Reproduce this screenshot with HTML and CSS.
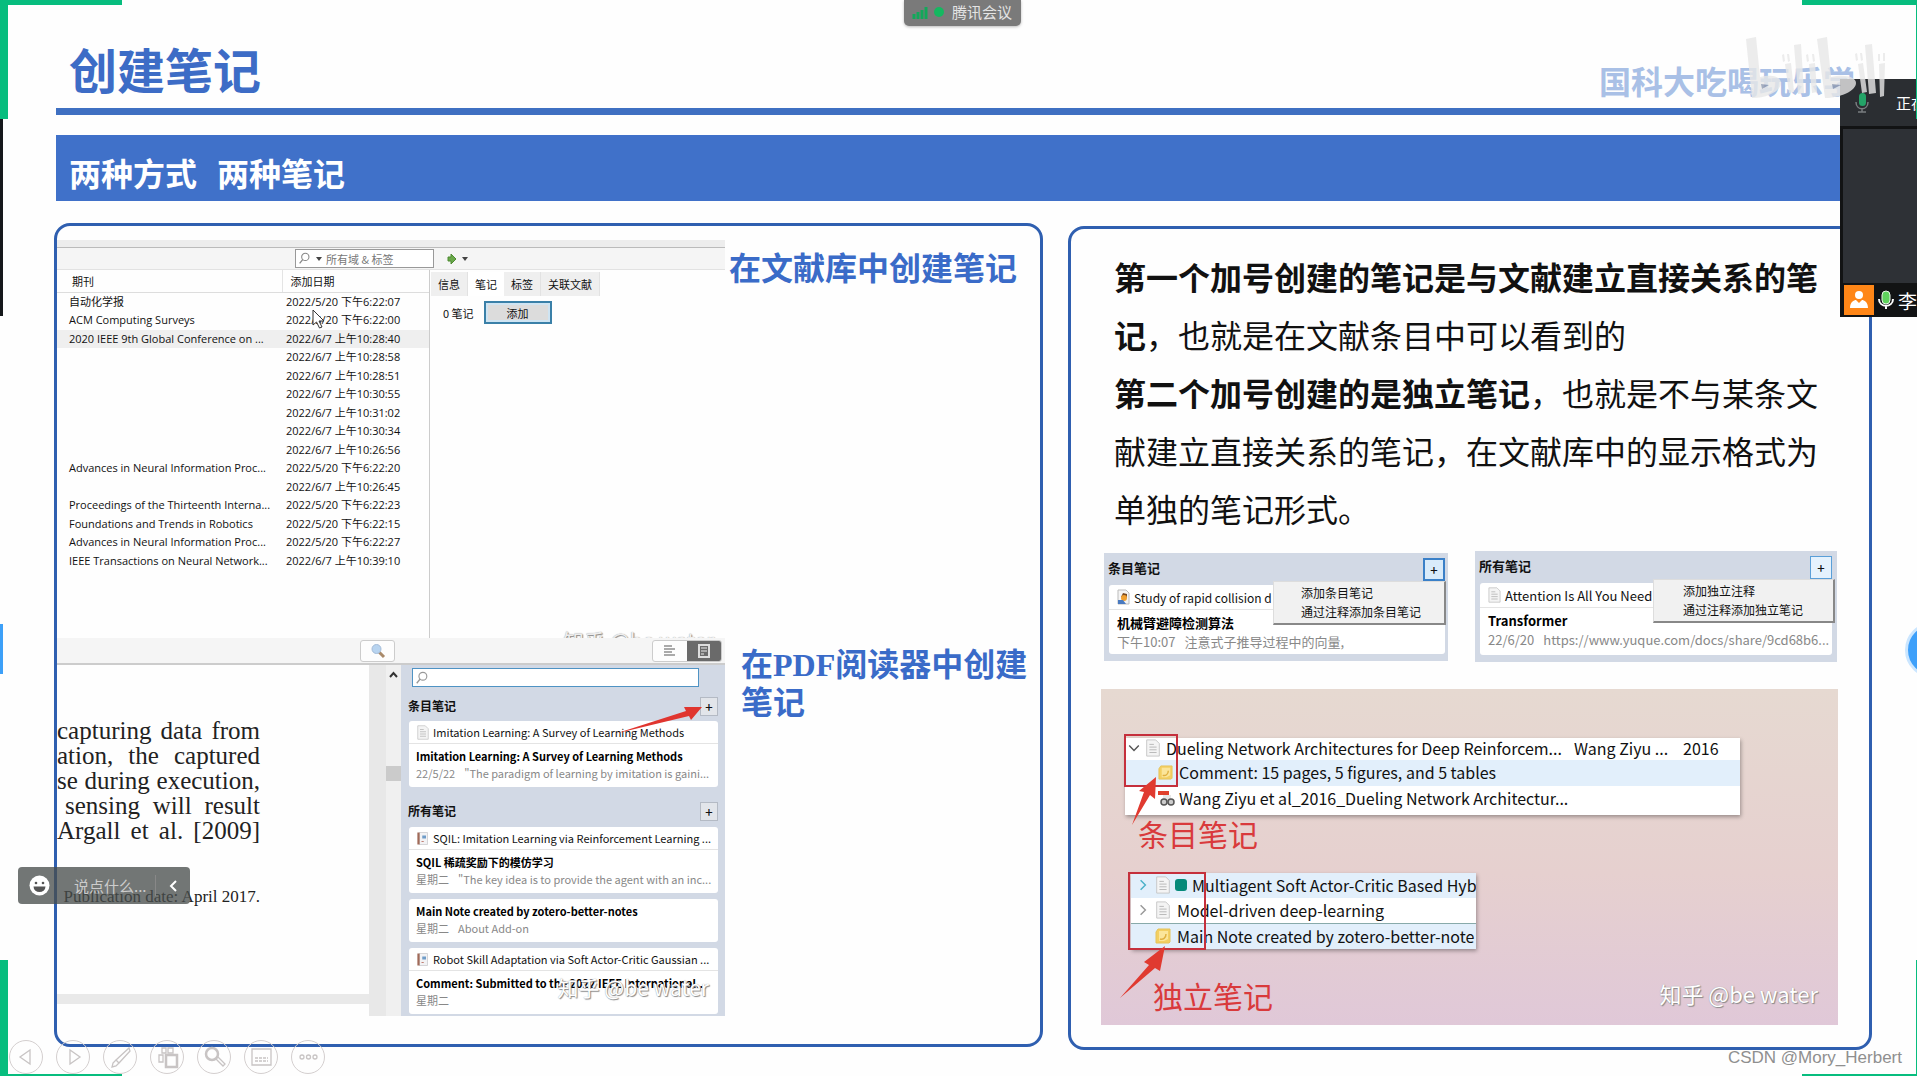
FILE: index.html
```html
<!DOCTYPE html>
<html lang="zh-CN">
<head>
<meta charset="utf-8">
<meta name="viewport" content="width=device-width, initial-scale=1">
<title>创建笔记</title>
<link rel="stylesheet" href="styles.css">
</head>
<body>
<svg class="defs" aria-hidden="true">
  <symbol id="i-doc" viewBox="0 0 16 20"><path d="M1 1h10l4 4v14H1z" fill="#f4f4f4" stroke="#c4c4c4"/><path d="M4 6h5M4 9h8M4 12h8M4 15h8" stroke="#b4b4b4"/></symbol>
  <symbol id="i-book" viewBox="0 0 16 20"><path d="M3 2h11v16H3z" fill="#f2f2f4" stroke="#c8c8cc"/><path d="M2 2v16" stroke="#a06a58" stroke-width="3"/><path d="M7 6h5v4H7z" fill="#6f9cc8"/><path d="M6 14h3" stroke="#b05a4a"/></symbol>
  <symbol id="i-note" viewBox="0 0 16 16"><path d="M3 1h12v13l-1 1H1V4z" fill="#f3cf62" stroke="#e6c35a"/><path d="M4 3h9v8l-4 2H4z" fill="#fbe59a"/><path d="M5 11c3 1 6-1 6-5" fill="none" stroke="#e0b040" stroke-width="1.5"/></symbol>
  <symbol id="i-glass" viewBox="0 0 16 16"><circle cx="9" cy="6" r="4.5" fill="none" stroke="currentColor" stroke-width="1.3"/><path d="M6 9l-4 5" stroke="currentColor" stroke-width="1.6"/></symbol>
  <symbol id="i-chev" viewBox="0 0 10 10"><path d="M3 1l4 4-4 4" fill="none" stroke="currentColor" stroke-width="1.2"/></symbol>
</svg>

<div class="slide">
  <header class="head">
    <h1>创建笔记</h1>
    <span class="owner">国科大吃喝玩乐学</span>
  </header>
  <div class="banner"><h2>两种方式</h2><h2>两种笔记</h2></div>

  <main class="panels">
    <section class="panel left">
      <div class="shot library">
        <div class="lib-bar">
          <label class="lib-search"><svg width="13" height="13"><use href="#i-glass"/></svg><i class="caret"></i><input type="text" placeholder="所有域 &amp; 标签" aria-label="所有域 &amp; 标签"></label>
          <svg width="28" height="14" viewBox="0 0 28 14"><path d="M2 5h3V2l5 5-5 5V9H2z" fill="#6aa84a" stroke="#4d8a30"/><path d="M16 5h6l-3 4z" fill="#444"/></svg>
        </div>
        <div class="lib-body">
          <table class="items">
            <thead><tr><th>期刊</th><th>添加日期</th></tr></thead>
            <tbody>
              <tr><td>自动化学报</td><td>2022/5/20 下午6:22:07</td></tr>
              <tr><td>ACM Computing Surveys</td><td>2022/5/20 下午6:22:00</td></tr>
              <tr class="on"><td>2020 IEEE 9th Global Conference on ...</td><td>2022/6/7 上午10:28:40</td></tr>
              <tr><td></td><td>2022/6/7 上午10:28:58</td></tr>
              <tr><td></td><td>2022/6/7 上午10:28:51</td></tr>
              <tr><td></td><td>2022/6/7 上午10:30:55</td></tr>
              <tr><td></td><td>2022/6/7 上午10:31:02</td></tr>
              <tr><td></td><td>2022/6/7 上午10:30:34</td></tr>
              <tr><td></td><td>2022/6/7 上午10:26:56</td></tr>
              <tr><td>Advances in Neural Information Proc...</td><td>2022/5/20 下午6:22:20</td></tr>
              <tr><td></td><td>2022/6/7 上午10:26:45</td></tr>
              <tr><td>Proceedings of the Thirteenth Interna...</td><td>2022/5/20 下午6:22:23</td></tr>
              <tr><td>Foundations and Trends in Robotics</td><td>2022/5/20 下午6:22:15</td></tr>
              <tr><td>Advances in Neural Information Proc...</td><td>2022/5/20 下午6:22:27</td></tr>
              <tr><td>IEEE Transactions on Neural Network...</td><td>2022/6/7 上午10:39:10</td></tr>
            </tbody>
          </table>
          <div class="detail">
            <div class="tabs"><button>信息</button><button class="cur">笔记</button><button>标签</button><button>关联文献</button></div>
            <div class="count"><span>0 笔记</span><button>添加</button></div>
          </div>
        </div>
        <div class="wm wm-cut">知乎 @be water</div>
        <svg class="pointer" width="13" height="20" viewBox="0 0 13 20"><path d="M1 1v15l3.500-3 3 6 2.500-1-3-6H12z" fill="#fff" stroke="#333"/></svg>
      </div>
      <h3 class="cap1">在文献库中创建笔记</h3>

      <div class="shot reader">
        <div class="rd-bar">
          <button class="find" aria-label="查找"><svg width="16" height="16" viewBox="0 0 16 16"><path d="M9 9l5 5" stroke="#a98a6a" stroke-width="3"/><circle cx="6.500" cy="6" r="4.500" fill="#b8d4f0" stroke="#a4bcd8"/></svg></button>
          <div class="seg">
            <button aria-label="大纲"><svg width="14" height="14" viewBox="0 0 14 14"><path d="M1 2h8M1 5h11M1 8h8M1 11h11" stroke="#aaa" stroke-width="2"/></svg></button>
            <button class="cur" aria-label="笔记"><svg width="14" height="16" viewBox="0 0 14 16"><path d="M2 2h10v12H2z" fill="none" stroke="#ddd" stroke-width="2"/><path d="M4 5h6M4 8h6M4 11h3" stroke="#aaa" stroke-width="2"/></svg></button>
          </div>
        </div>
        <div class="rd-body">
          <div class="page">
            <div class="sheet">
              <p class="ln">capturing data from</p>
              <p class="ln">ation, the captured</p>
              <p class="ln">se during execution,</p>
              <p class="ln ind">sensing will result</p>
              <p class="ln">Argall et al. [2009]</p>
              <p class="foot">Publication date: April 2017.</p>
            </div>
            <div class="sheet-next"></div>
          </div>
          <div class="scroll"><svg width="9" height="7" viewBox="0 0 9 7"><path d="M1 6l3.500-4L8 6" fill="none" stroke="#333" stroke-width="2"/></svg><i></i></div>
          <aside class="notes">
            <label class="note-search"><svg width="14" height="14"><use href="#i-glass"/></svg><input type="text" aria-label="搜索笔记"></label>
            <div class="nh"><h4>条目笔记</h4><button>+</button></div>
            <article class="card">
              <div class="src"><svg width="12" height="15"><use href="#i-doc"/></svg>Imitation Learning: A Survey of Learning Methods</div>
              <div class="txt"><b>Imitation Learning: A Survey of Learning Methods</b><p><span>22/5/22</span>"The paradigm of learning by imitation is gaini...</p></div>
            </article>
            <div class="nh second"><h4>所有笔记</h4><button>+</button></div>
            <article class="card">
              <div class="src"><svg width="12" height="15"><use href="#i-book"/></svg>SQIL: Imitation Learning via Reinforcement Learning ...</div>
              <div class="txt"><b>SQIL 稀疏奖励下的模仿学习</b><p><span>星期二</span>"The key idea is to provide the agent with an inc...</p></div>
            </article>
            <article class="card">
              <div class="txt"><b>Main Note created by zotero-better-notes</b><p><span>星期二</span>About Add-on</p></div>
            </article>
            <article class="card">
              <div class="src"><svg width="12" height="15"><use href="#i-book"/></svg>Robot Skill Adaptation via Soft Actor-Critic Gaussian ...</div>
              <div class="txt"><b>Comment: Submitted to the 2022 IEEE International...</b><p><span>星期二</span></p></div>
            </article>
            <svg class="arrow-add" width="86" height="30" viewBox="0 0 86 30"><path d="M0 28.500L70 6l-2-4L86 2 75 15l-2-4z" fill="#e0352f"/></svg>
            <div class="wm wm-notes">知乎 @be water</div>
          </aside>
        </div>
      </div>
      <h3 class="cap2">在PDF阅读器中创建笔记</h3>
    </section>

    <section class="panel right">
      <div class="prose">
        <p><b>第一个加号创建的笔记是与文献建立直接关系的笔记</b>，也就是在文献条目中可以看到的</p>
        <p><b>第二个加号创建的是独立笔记</b>，也就是不与某条文献建立直接关系的笔记，在文献库中的显示格式为单独的笔记形式。</p>
      </div>
      <div class="pair">
        <div class="mini">
          <div class="nh"><h4>条目笔记</h4><button class="hot">+</button></div>
          <article class="card">
            <div class="src"><svg width="13" height="16" viewBox="0 0 13 16"><path d="M1 1h8l3 3v11H1z" fill="#f4f4f4" stroke="#bbb"/><path d="M4 8l2-4 4 1v4z" fill="#7a4a20"/><circle cx="7" cy="9" r="3" fill="#f0a030"/><path d="M1 11h5l3 4H1z" fill="#4a7ac0"/></svg>Study of rapid collision d</div>
            <div class="txt"><b>机械臂避障检测算法</b><p><span>下午10:07</span>注意式子推导过程中的向量,</p></div>
          </article>
          <ul class="menu"><li>添加条目笔记</li><li>通过注释添加条目笔记</li></ul>
        </div>
        <div class="mini">
          <div class="nh"><h4>所有笔记</h4><button class="hot soft">+</button></div>
          <article class="card">
            <div class="src"><svg width="13" height="16"><use href="#i-doc"/></svg>Attention Is All You Need</div>
            <div class="txt"><b>Transformer</b><p><span>22/6/20</span>https://www.yuque.com/docs/share/9cd68b6...</p></div>
          </article>
          <ul class="menu"><li>添加独立注释</li><li>通过注释添加独立笔记</li></ul>
        </div>
      </div>
      <div class="pink">
        <div class="group">
          <table class="tree wide">
            <tr class="r1"><td class="lead"><div><svg class="down" width="12" height="12"><use href="#i-chev"/></svg><svg width="16" height="18"><use href="#i-doc"/></svg></div></td><td>Dueling Network Architectures for Deep Reinforcem...</td><td>Wang Ziyu ...</td><td>2016</td></tr>
            <tr class="sel r2"><td class="lead kid"><div><svg width="15" height="15"><use href="#i-note"/></svg></div></td><td class="sub" colspan="3">Comment: 15 pages, 5 figures, and 5 tables</td></tr>
            <tr class="r3"><td class="lead kid"><div><svg width="17" height="17" viewBox="0 0 17 17"><path d="M0 1h11v4H0z" fill="#e0402c"/><path d="M5 5h8v5H5z" fill="#e6e6e6"/><circle cx="6" cy="12" r="3" fill="#ccc" stroke="#555" stroke-width="1.500"/><circle cx="13" cy="12" r="3" fill="#ccc" stroke="#555" stroke-width="1.500"/></svg></div></td><td class="sub" colspan="3">Wang Ziyu et al_2016_Dueling Network Architectur...</td></tr>
          </table>
          <i class="frame f1"></i>
          <svg class="a1" width="32" height="50" viewBox="0 0 32 50"><path d="M3 49L15 16l-5-1L27 1l-1 22-5-4z" fill="#e03a30"/></svg>
          <p class="tag">条目笔记</p>
        </div>
        <div class="group two">
          <table class="tree narrow">
            <tr class="sel"><td><div><svg class="cy" width="12" height="12"><use href="#i-chev"/></svg><svg width="16" height="18"><use href="#i-doc"/></svg><i class="sq"></i>Multiagent Soft Actor-Critic Based Hybrid</div></td></tr>
            <tr><td><div><svg width="12" height="12"><use href="#i-chev"/></svg><svg width="16" height="18"><use href="#i-doc"/></svg>Model-driven deep-learning</div></td></tr>
            <tr class="sel line"><td><div><svg width="12" height="12"></svg><svg width="16" height="16"><use href="#i-note"/></svg>Main Note created by zotero-better-note</div></td></tr>
          </table>
          <i class="frame f2"></i>
          <svg class="a2" width="48" height="54" viewBox="0 0 48 54"><path d="M1 53L30 20l-5-3L46 1l-5 25-5-3z" fill="#e03a30"/></svg>
          <p class="tag">独立笔记</p>
        </div>
        <div class="wm wm-pink">知乎 @be water</div>
      </div>
    </section>
  </main>

  <nav class="show-nav" aria-label="放映控制">
    <button aria-label="上一页"><svg viewBox="0 0 34 34"><path d="M21 10v14L11 17z"/></svg></button>
    <button aria-label="下一页"><svg viewBox="0 0 34 34"><path d="M14 10v14l10-7z"/></svg></button>
    <button aria-label="画笔"><svg viewBox="0 0 34 34"><path d="M13 20L26 8l1 3-11 12zM13 20l-3 3-1 4 4-1 3-3"/></svg></button>
    <button aria-label="全部幻灯片"><svg viewBox="0 0 34 34"><path d="M9 15h4v7H9zM12 8h4v5h-4zM18 8h5v5h-5z"/><path d="M16 15h11v12H16z" stroke-width="2.500"/></svg></button>
    <button aria-label="放大"><svg viewBox="0 0 34 34"><circle cx="15" cy="14" r="6" stroke-width="2.500"/><path d="M19 19l7 7 2-2-7-7"/></svg></button>
    <button aria-label="字幕"><svg viewBox="0 0 34 34"><path d="M8 9h19v16H8z"/><path d="M11 18h13M11 21h13" stroke-dasharray="3 1"/></svg></button>
    <button aria-label="更多"><svg viewBox="0 0 34 34"><circle cx="11" cy="17" r="2"/><circle cx="17.500" cy="17" r="2"/><circle cx="24" cy="17" r="2"/></svg></button>
  </nav>
</div>

<i class="corner tl"></i><i class="corner bl"></i><i class="corner br"></i>
<i class="edge dark"></i><i class="edge blue"></i><div class="bubble"><i></i></div>

<div class="pill"><svg width="17" height="14" viewBox="0 0 17 14"><path d="M2 14V9M6 14V7M10 14V5M14 14V2" stroke="#12a85a" stroke-width="3"/></svg><i></i><span>腾讯会议</span></div>

<div class="chat"><svg width="21" height="21" viewBox="0 0 21 21"><circle cx="10.500" cy="10.500" r="10" fill="#fff"/><circle cx="7" cy="8" r="1.300" fill="#555"/><circle cx="14" cy="8" r="1.300" fill="#555"/><path d="M4.500 11.500h12a6 5.500 0 0 1-12 0z" fill="#555"/></svg><input type="text" placeholder="说点什么..." aria-label="说点什么"><button aria-label="收起"><svg width="9" height="14" viewBox="0 0 9 14"><path d="M7 2L2 7l5 5" fill="none" stroke="#fff" stroke-width="2"/></svg></button></div>

<aside class="meet">
  <div class="speak"><svg width="16" height="22" viewBox="0 0 16 22"><rect x="5" y="1" width="7" height="13" rx="3.500" fill="#24a468"/><path d="M2 10c0 9 12 9 12 0M8 17v3M4 20h8" fill="none" stroke="#7a7d80" stroke-width="1.500"/></svg><span>正在讲话</span></div>
  <div class="video"></div>
  <div class="who"><svg width="30" height="30" viewBox="0 0 30 30"><path d="M0 0h30v30H0z" fill="#ff8617"/><circle cx="15" cy="10" r="4" fill="#fff"/><path d="M6 23c0-6 4-8 6-8l3 3 3-3c2 0 6 2 6 8z" fill="#fff"/></svg><svg width="16" height="20" viewBox="0 0 16 20"><rect x="4" y="1" width="8" height="13" rx="4" fill="#5fd35c" stroke="#e8f5e8"/><path d="M1 9c0 9 14 9 14 0M8 15v4" fill="none" stroke="#fff" stroke-width="2"/></svg><span>李</span></div>
</aside>
<i class="corner tr"></i>

<svg class="bili" width="142" height="64" viewBox="0 0 142 64" aria-label="bilibili"><g fill="#e8e8e8"><path d="M1 3L11 1l4 40c12-3 21 0 21 6 0 8-14 15-29 15z"/><path d="M72 3l10-2 4 40c14-3 25 0 25 6 0 8-16 15-31 15z"/><path d="M49 9l7-1 3 49-6 1zM120 9l7-1 4 49-7 1z"/><path d="M40 28l6-1 3 29-5 1zM64 28l6-1 2 29-5 1zM113 28l5-1 4 29-5 1zM134 28l6-1-1 33-4 1z"/><path d="M37 19l2-1 1 7-2 1zM42 18h2l1 7-2 1zM61 19l2-1 1 7-2 1zM67 18h2l1 7-2 1zM110 18l2-1 1 7-2 1zM115 17h2l1 7-2 1zM133 18h2v7h-2zM138 17h2v8h-2z"/></g><path d="M16 48l8 1-7 4zM87 48l9 1-8 4z" fill="#8c98b0"/></svg>
<div class="csdn">CSDN @Mory_Herbert</div>
</body>
</html>
```
FILE: styles.css
```css
* { box-sizing: border-box; }
body { margin: 0; background: #fefefe; color: #111; font-family: "Noto Sans CJK SC", sans-serif; position: relative; overflow: hidden; }
h1, h2, h3, h4, p, ul { margin: 0; padding: 0; }
button, input { font: inherit; color: inherit; margin: 0; padding: 0; border: 0; background: none; min-width: 0; outline: 0; }
.defs { position: absolute; width: 0; height: 0; }
svg { display: block; flex: none; }

.slide { min-height: 100vh; position: relative; overflow: hidden; }
.head { margin-left: 56px; padding: 30px 62px 0 13px; height: 115px; border-bottom: 7px solid #3f70c2; display: flex; justify-content: space-between; }
.head h1 { font-size: 48px; line-height: 76px; font-weight: 700; color: #3d6cc6; }
.owner { font-size: 32px; line-height: 100px; font-weight: 700; color: #a9c0e6; }
.banner { margin: 20px 0 0 56px; height: 66px; padding: 9px 13px 0; background: #4071c9; color: #fff; display: flex; gap: 20px; }
.banner h2 { font-size: 32px; line-height: 56px; font-weight: 700; }

.panels { display: grid; grid-template-columns: 989fr 804fr; gap: 25px; margin: 22px 45px 27px 54px; align-items: start; }
.panel { border: 3px solid #2f5fb0; border-radius: 16px; height: 824px; }
.panel h3 { font-size: 32px; line-height: 38px; font-weight: 700; color: #3a6bc8; font-family: "Liberation Serif", "Noto Sans CJK SC", serif; }
.left { display: grid; grid-template-columns: 668px 1fr; grid-template-rows: 398px 378px; padding-top: 14px; }
.left .cap1 { padding: 10px 0 0 4px; }
.left .cap2 { padding: 8px 8px 0 16px; }
.shot { position: relative; overflow: hidden; font-size: 11px; line-height: 16px; }

.library { border-top: 7px solid #ededed; display: flex; flex-direction: column; }
.lib-bar { height: 23px; border-top: 1px solid #bbb; background: #f5f5f5; display: flex; align-items: center; padding-left: 238px; gap: 12px; border-bottom: 1px solid #e2e2e2; flex: none; }
.lib-search { width: 139px; height: 19px; border: 1px solid #999; background: #fff; display: flex; align-items: center; padding-left: 2px; color: #888; }
.lib-search input { width: 100px; padding-left: 4px; }
.lib-search input::placeholder { color: #777; opacity: 1; }
.caret { border: 3px solid transparent; border-top: 4px solid #444; border-bottom: 0; margin-left: 5px; }
.lib-body { display: grid; grid-template-columns: 372px 1fr; flex: 1; }
.items { border-collapse: collapse; table-layout: fixed; width: 372px; height: 300px; }
.items th { height: 22px; text-align: left; font-weight: 400; border-bottom: 1px solid #ddd; padding: 0 0 0 15px; }
.items th:nth-child(2) { width: 147px; padding-left: 8px; border-left: 1px solid #e4e4e4; }
.items td { padding: 0 0 0 12px; white-space: nowrap; line-height: 16px; font-family: "Open Sans", "Noto Sans CJK SC", sans-serif; }
.items td:nth-child(2) { padding-left: 4px; }
.items .on { background: #efefef; }
.detail { border-left: 1px solid #ccc; }
.tabs { display: flex; padding: 2px 0 0 1px; }
.tabs button { height: 24px; padding: 0 7px; background: #efefef; border-right: 1px solid #e2e2e2; }
.tabs button.cur { background: #fff; border: 0; }
.count { display: flex; align-items: center; gap: 10px; padding: 5px 0 0 13px; }
.count button { width: 68px; height: 23px; border: 2px solid #3a80a8; background: #dcdcdc; box-shadow: inset 0 0 0 2px #cfe4f2; }
.pointer { position: absolute; left: 255px; top: 62px; }

.wm { position: absolute; color: #fff; white-space: nowrap; text-shadow: 1px 1px 1px #888, 0 0 1px #999; font-size: 21px; line-height: 28px; }
.wm-cut { left: 506px; top: 379px; color: #eee; }
.wm-notes { right: 16px; top: 308px; }
.wm-pink { right: 20px; bottom: 18px; font-size: 22px; }
.reader { display: flex; flex-direction: column; }
.rd-bar { height: 27px; background: #f5f5f5; border-bottom: 2px solid #ccc; display: flex; justify-content: space-between; align-items: center; padding: 0 3px 0 303px; }
.find, .seg { height: 22px; border: 1px solid #ccc; border-radius: 3px; background: #fdfdfd; }
.find { width: 35px; display: grid; place-items: center; }
.seg { width: 70px; display: flex; overflow: hidden; }
.seg button { flex: 1; display: grid; place-items: center; }
.seg .cur { background: #6a6a6a; }
.rd-body { flex: 1; display: grid; grid-template-columns: 312px 32px 1fr; min-height: 0; }
.sheet { height: 329px; padding-top: 53px; padding-right: 109px; font-family: "Liberation Serif", serif; color: #222; }
.ln { font-size: 25px; line-height: 25px; height: 25px; white-space: nowrap; text-align-last: justify; }
.ind { padding-left: 8px; }
.foot { font-size: 17px; line-height: 20px; padding-top: 44px; display: flex; justify-content: flex-end; white-space: nowrap; }
.sheet-next { border-top: 10px solid #e9e9e9; }
.scroll { background: linear-gradient(90deg, #e8e8e8 17px, #f0f0f0 17px); padding: 6px 0 0 17px; display: flex; flex-direction: column; align-items: center; }
.scroll i { width: 15px; height: 15px; background: #cbcbcb; margin-top: 88px; }
.notes { background: #d2d9e5; position: relative; padding: 3px 7px 0 8px; overflow: hidden; }
.note-search { display: flex; align-items: center; width: 287px; height: 19px; margin-left: 3px; border: 1px solid #4f93c4; background: #fff; padding-left: 2px; color: #999; }
.note-search input { flex: 1; }
.nh { display: flex; align-items: center; justify-content: space-between; height: 34px; padding: 4px 0 0; }
.nh h4 { font-size: 12px; font-weight: 700; margin-left: -1px; }
.nh button { width: 18px; height: 19px; border: 1px solid #b4bac4; background: #e2e5ea; font-size: 13px; line-height: 15px; font-weight: 500; }
.nh.second { height: 40px; padding: 8px 0 0; }
.card { background: #fff; border-radius: 3px; margin-bottom: 6px; }
.notes .card:nth-of-type(1) { margin-bottom: 0; }
.src { height: 23px; border-bottom: 1px solid #e4e4e4; display: flex; align-items: center; gap: 4px; padding-left: 8px; white-space: nowrap; overflow: hidden; }
.txt { padding: 3px 7px 5px; white-space: nowrap; }
.txt b { display: block; line-height: 18px; color: #000; }
.txt p { display: flex; gap: 9px; line-height: 17px; height: 17px; color: #888; }
.arrow-add { position: absolute; left: 215px; top: 40px; }

.right { padding: 18px 31px 0 31px; margin-top: 3px; }
.prose { font-size: 32px; line-height: 58px; padding: 0 7px 0 12px; height: 304px; }
.pair { display: grid; grid-template-columns: minmax(0, 344fr) minmax(0, 362fr); gap: 27px; margin-left: 2px; margin-right: 1px; font-size: 13px; height: 111px; }
.mini { background: #d2d9e5; position: relative; padding: 0 5px 5px; }
.mini:first-child { margin: 2px 0 1px; padding-right: 3px; }
.mini .nh { height: 32px; padding: 0; }
.mini .nh h4 { font-size: 13px; line-height: 20px; padding-bottom: 2px; }
.mini .nh button { width: 22px; height: 23px; }
.nh button.hot { border: 2px solid #3a80c8; background: #d9ebfa; }
.nh button.soft { border: 1px solid #5a9fd8; background: #e5f2fd; }
.mini .card { height: 72px; margin: 0; }
.mini:first-child .card { height: 69px; }
.mini .src { padding-left: 8px; height: 25px; }
.mini:first-child .src { font-size: 12px; }
.mini .txt { padding: 4px 8px 0; }
.mini .txt p { line-height: 19px; }
.menu { position: absolute; top: 28px; right: 2px; list-style: none; width: 173px; background: #f1f1f1; border: 1px solid #ddd; border-right: 2px solid #888; border-bottom: 2px solid #888; padding: 1px 0 2px 27px; font-size: 12px; line-height: 19px; white-space: nowrap; }
.mini + .mini .menu { width: 182px; padding-left: 29px; }

.pink { position: relative; margin: 27px 0 0 -1px; height: 336px; padding: 49px 24px 0; background: linear-gradient(#e6d9d1, #e6d0cf 55%, #e0c8d8); }
.group { position: relative; }
.tree { border-collapse: collapse; background: #fff; font-size: 16px; line-height: 20px; white-space: nowrap; box-shadow: 1px 2px 4px #0005; }
.tree td { padding: 0; }
.tree td div { display: flex; align-items: center; }
.tree .sel { background: #e2effb; }
.wide { width: 615px; height: 77px; table-layout: fixed; }
.wide td:nth-child(1) { width: 41px; }
.wide td:nth-child(2) { width: 408px; }
.wide td:nth-child(3) { width: 109px; }
.wide td { vertical-align: top; }
.wide .r1 { height: 22px; }
.wide .r2 { height: 26px; }
.wide .r3 { height: 29px; }
.lead div { gap: 5px; padding-left: 3px; height: 20px; }
.tree .r2 td, .tree .r3 td { padding-top: 2px; }
.tree .lead.kid div { padding-left: 33px; }
.tree .sub { padding-left: 13px; }
.down { transform: rotate(90deg); color: #555; }
.frame { position: absolute; border: 2px solid #c5303c; }
.f1 { left: -1px; top: -4px; width: 54px; height: 53px; }
.a1 { position: absolute; left: 4px; top: 38px; }
.tag { color: #d93a3c; font-size: 30px; line-height: 36px; padding-left: 13px; }
.two { margin-top: 22px; padding-left: 6px; }
.two .tag { padding: 28px 0 0 22px; }
.narrow { display: block; width: 345px; height: 76px; overflow: hidden; }
.narrow tr { height: 25px; }
.narrow td div { gap: 6px; padding-left: 6px; height: 25px; width: 345px; padding-bottom: 2px; }
.narrow svg:first-child { color: #999; }
.narrow svg.cy:first-child { color: #4ab0c8; }
.line { border-top: 1px solid #8aa; }
.sq { width: 12px; height: 12px; border-radius: 3px; background: #068a7a; flex: none; margin: 0 -1px 0 -2px; }
.f2 { left: 3px; top: -1px; width: 78px; height: 78px; }
.a2 { position: absolute; left: -6px; top: 72px; }

.show-nav { position: absolute; left: 9px; bottom: 3px; display: flex; gap: 13px; }
.show-nav button { width: 34px; height: 34px; border: 1px solid #d4cfcf; border-radius: 50%; }
.show-nav svg { fill: none; stroke: #c8c4c4; stroke-width: 1.3; margin: -1px; width: 34px; height: 34px; }

.corner { position: absolute; border: 0 solid #07bd7e; }
.tl { left: 0; top: 0; width: 122px; height: 119px; border-top-width: 5px; border-left-width: 8px; }
.bl { left: 0; bottom: 0; width: 122px; height: 117px; border-bottom-width: 3px; border-left-width: 8px; }
.tr { right: 0; top: 0; width: 115px; height: 119px; border-top-width: 5px; border-right-width: 1px; }
.br { right: 0; bottom: 0; width: 115px; height: 117px; border-bottom-width: 3px; border-right-width: 1px; }
.edge { position: absolute; left: 0; width: 3px; }
.dark { top: 119px; height: 197px; background: #15181b; }
.blue { top: 624px; height: 50px; background: #3da0f8; }
.bubble { position: absolute; right: 0; top: 622px; width: 12px; height: 56px; overflow: hidden; }
.bubble i { display: block; width: 56px; height: 56px; border-radius: 50%; background: #3ea0fa; border: 3px solid #cbe6ff; }
.pill { position: absolute; left: 904px; top: 0; height: 26px; width: 117px; background: #7a7a7a; color: #e4e4e4; border-radius: 0 0 5px 5px; display: flex; align-items: center; padding: 0 0 2px 8px; font-size: 15px; line-height: 20px; box-shadow: 0 1px 3px #0004; white-space: nowrap; }
.pill i { width: 10px; height: 10px; border-radius: 50%; background: #14b860; margin: 0 8px 0 5px; }
.chat { position: absolute; left: 18px; top: 867px; width: 172px; height: 37px; border-radius: 4px; background: #484d4bc4; display: flex; align-items: center; padding-left: 11px; color: #ddd; font-size: 15px; }
.chat input { width: 106px; padding-left: 24px; border-right: 1px solid #888; }
.chat input::placeholder { color: #ccc; opacity: 1; }
.chat button { width: 34px; display: grid; place-items: center; }
.meet { position: absolute; right: 0; top: 79px; width: 77px; height: 238px; background: #121314; overflow: hidden; color: #fff; display: flex; flex-direction: column; }
.speak { height: 47px; background: #2b2e32; display: flex; align-items: center; padding-left: 14px; gap: 26px; font-size: 15px; white-space: nowrap; }
.video { flex: 1; background: #2e3136; margin: 3px 0 0 3px; }
.who { height: 34px; display: flex; align-items: center; padding-left: 4px; gap: 4px; font-size: 19px; }
.bili { position: absolute; right: 30px; top: 36px; opacity: .8; }
.csdn { position: absolute; right: 15px; bottom: 7px; font-family: "Liberation Sans", sans-serif; font-size: 17px; line-height: 24px; color: #8f8f8f; text-shadow: 1px 1px 0 #fff; }
```
